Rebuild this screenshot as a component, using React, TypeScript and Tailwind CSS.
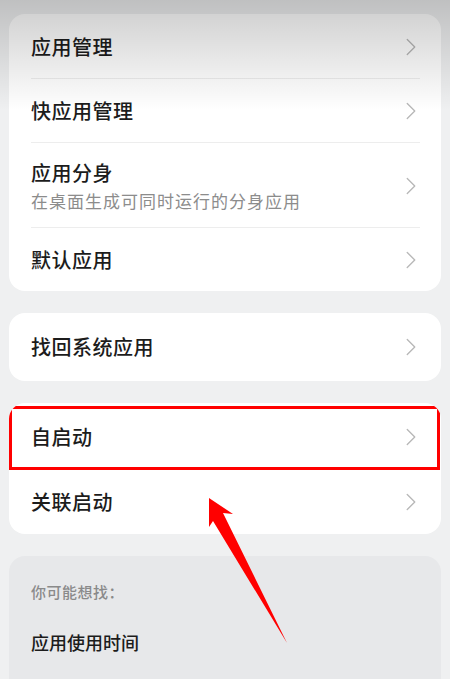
import { ChevronRight } from "lucide-react";

type Row = { title: string; subtitle?: string; height: string; highlight?: boolean };

const groups: Row[][] = [
  [
    { title: "应用管理", height: "h-[65px]" },
    { title: "快应用管理", height: "h-[64px]" },
    { title: "应用分身", subtitle: "在桌面生成可同时运行的分身应用", height: "h-[85px]" },
    { title: "默认应用", height: "h-[63px]" },
  ],
  [{ title: "找回系统应用", height: "h-[68px]" }],
  [
    { title: "自启动", height: "h-[67px]", highlight: true },
    { title: "关联启动", height: "h-[64px]" },
  ],
];

function SettingRow({ row, last }: { row: Row; last: boolean }) {
  return (
    <div className={`relative flex items-center justify-between pl-[22px] pr-[15px] ${row.height}`}>
      <div className="flex flex-col">
        <span className="text-[20px] font-medium leading-[26px] tracking-[0.5px] text-[#1c1c1c]">{row.title}</span>
        {row.subtitle && (
          <span className="mt-[4px] text-[17px] leading-[22px] tracking-[1px] text-[#8c8c8c]">
            {row.subtitle}
          </span>
        )}
      </div>
      <ChevronRight size={30} strokeWidth={1.1} className="text-[#b9b9b9]" />
      {!last && !row.highlight && (
        <div className="absolute bottom-0 left-[22px] right-[21px] h-px bg-[#ededed]" />
      )}
      {row.highlight && (
        <div className="pointer-events-none absolute left-0 right-[1px] top-[3px] bottom-0 border-[3px] border-[#ff0000]" />
      )}
    </div>
  );
}

export default function App() {
  return (
    <div
      className="relative h-[679px] w-[450px] overflow-hidden bg-[#eff0f1]"
      style={{ fontFamily: '"Noto Sans CJK SC", "Noto Sans", sans-serif' }}
    >
      <div className="flex flex-col gap-[22px] px-[9px] pt-[14px]">
        {groups.map((rows, gi) => (
          <section key={gi} className="overflow-hidden rounded-[16px] bg-white">
            {rows.map((row, i) => (
              <SettingRow key={row.title} row={row} last={i === rows.length - 1} />
            ))}
          </section>
        ))}

        <section className="h-[200px] rounded-[16px] bg-[#e7e8ea] pl-[22px] pt-[26px]">
          <p className="text-[15px] font-medium leading-[20px] tracking-[0.5px] text-[#8a8a8a]">你可能想找：</p>
          <p className="mt-[28px] text-[18px] font-medium leading-[24px] text-[#1c1c1c]">应用使用时间</p>
        </section>
      </div>

      {/* top fade from the status area */}
      <div className="pointer-events-none absolute inset-x-0 top-0 h-[110px] bg-gradient-to-b from-black/20 to-transparent" />

      {/* red annotation arrow */}
      <svg className="pointer-events-none absolute inset-0" width="450" height="679" viewBox="0 0 450 679">
        <polygon
          points="209,498 233,514 223,513 287,643 213,521 209,527"
          fill="#ff0000"
        />
      </svg>
    </div>
  );
}
